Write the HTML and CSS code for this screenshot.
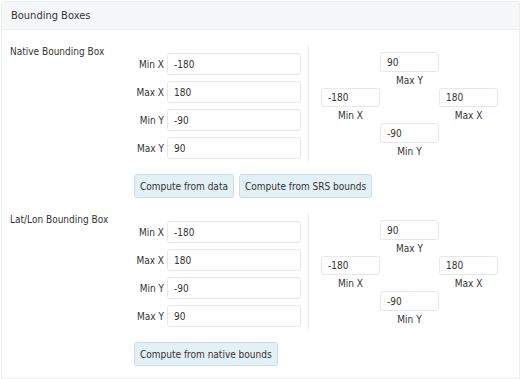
FILE: index.html
```html
<!DOCTYPE html>
<html lang="en">
<head>
    <meta charset="UTF-8">
    <title>Bounding Boxes</title>
    <link rel="stylesheet" href="styles.css">
</head>
<body>

    <div class="panel">
        <div class="panel-head">Bounding Boxes</div>
        <div class="panel-body">

            <div class="bbox">
                <div class="bbox-title">Native Bounding Box</div>
                <div class="fields">
                    <div class="field"><label>Min X</label><input type="text" value="-180"></div>
                    <div class="field"><label>Max X</label><input type="text" value="180"></div>
                    <div class="field"><label>Min Y</label><input type="text" value="-90"></div>
                    <div class="field"><label>Max Y</label><input type="text" value="90"></div>
                </div>
                <div class="compass">
                    <div class="cell max-y"><input type="text" value="90"><span>Max Y</span></div>
                    <div class="cell min-x"><input type="text" value="-180"><span>Min X</span></div>
                    <div class="cell max-x"><input type="text" value="180"><span>Max X</span></div>
                    <div class="cell min-y"><input type="text" value="-90"><span>Min Y</span></div>
                </div>
            </div>
            <div class="actions">
                <button>Compute from data</button>
                <button>Compute from SRS bounds</button>
            </div>

            <div class="bbox second">
                <div class="bbox-title">Lat/Lon Bounding Box</div>
                <div class="fields">
                    <div class="field"><label>Min X</label><input type="text" value="-180"></div>
                    <div class="field"><label>Max X</label><input type="text" value="180"></div>
                    <div class="field"><label>Min Y</label><input type="text" value="-90"></div>
                    <div class="field"><label>Max Y</label><input type="text" value="90"></div>
                </div>
                <div class="compass">
                    <div class="cell max-y"><input type="text" value="90"><span>Max Y</span></div>
                    <div class="cell min-x"><input type="text" value="-180"><span>Min X</span></div>
                    <div class="cell max-x"><input type="text" value="180"><span>Max X</span></div>
                    <div class="cell min-y"><input type="text" value="-90"><span>Min Y</span></div>
                </div>
            </div>
            <div class="actions">
                <button>Compute from native bounds</button>
            </div>

        </div>
    </div>

</body>
</html>
```

FILE: styles.css
```css
* {
    margin: 0;
    padding: 0;
    box-sizing: border-box;
}

body {
    font-family: "DejaVu Sans Condensed", "DejaVu Sans", sans-serif;
    font-stretch: condensed;
    font-size: 10px;
    color: #333;
    background-color: white;
}

.panel {
    margin: 1px 1px 0 1px;
    border: 1px solid #eceef0;
    border-radius: 3px 3px 0 0;
}

.panel-head {
    height: 28px;
    line-height: 28px;
    padding-left: 9px;
    font-size: 11px;
    background-color: #f6f7f9;
    border-bottom: 1px solid #eceef0;
}

.panel-body {
    padding: 15px 0 12px 0;
}

.bbox {
    display: flex;
}

.bbox.second {
    margin-top: 15px;
}

.bbox-title {
    width: 131px;
    padding-left: 8px;
    line-height: 13px;
}

.fields {
    width: 168px;
    padding-top: 8px;
    display: flex;
    flex-direction: column;
    gap: 6px;
}

.field {
    display: flex;
    align-items: center;
}

.field label {
    width: 34px;
    padding-right: 3px;
    text-align: right;
}

input {
    height: 22px;
    border: 1px solid #e6e8ea;
    border-radius: 3px;
    padding: 0 6px;
    font-family: inherit;
    font-stretch: condensed;
    font-size: 10px;
    color: #333;
    outline: none;
}

.field input {
    width: 134px;
}

.compass {
    margin-left: 7px;
    padding: 7px 0 0 12px;
    border-left: 1px solid #e8eaec;
    display: grid;
    grid-template-columns: 59px 59px 59px;
    grid-template-rows: 36px 35px 36px;
    height: 116px;
}

.cell {
    display: flex;
    flex-direction: column;
    align-items: center;
}

.cell input {
    width: 59px;
}

.cell span {
    padding-top: 2px;
    line-height: 14px;
}

.max-y {
    grid-column: 2;
    grid-row: 1;
}

.min-x {
    grid-column: 1;
    grid-row: 2;
}

.max-x {
    grid-column: 3;
    grid-row: 2;
}

.min-y {
    grid-column: 2;
    grid-row: 3;
}

.actions {
    display: flex;
    gap: 5px;
    margin-top: 13px;
    padding-left: 132px;
}

button {
    height: 24px;
    padding: 0 5px;
    background-color: #e3f0f5;
    border: 1px solid #c9dfe8;
    border-radius: 3px;
    font-family: inherit;
    font-stretch: condensed;
    font-size: 10px;
    color: #333;
    cursor: pointer;
}
```
